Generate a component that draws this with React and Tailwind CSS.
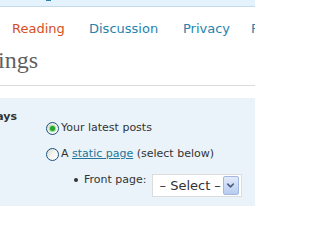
import { ChevronDown } from 'lucide-react';

const Radio = ({ checked }) => (
    <div className="w-[13px] h-[13px] shrink-0 rounded-full border border-[#1c5180] bg-gradient-to-br from-[#dcdcd4] via-[#f4f4f0] to-white flex items-center justify-center">
        {checked && <div className="w-[5px] h-[5px] rounded-full bg-[#2aa52a] shadow-[0_0_1px_1px_#8ddc8d]"></div>}
    </div>
);

const App = () => {
    return (
        <div className="w-[255px] h-[206px] overflow-hidden bg-white text-[#333] font-['DejaVu_Sans',Verdana,sans-serif]">
            {/* top admin bar edge */}
            <div className="h-[7px] bg-[#e4f2fd] border-b border-[#c6d9e9] pl-[46px]">
                <div className="w-[5px] h-[1px] bg-[#2583ad]"></div>
            </div>

            {/* submenu tabs */}
            <div className="mt-[14px] flex pl-[12px] text-[13px] leading-[16px] whitespace-nowrap">
                <span className="w-[77px] shrink-0 text-[#d54e21]">Reading</span>
                <span className="w-[94px] shrink-0 text-[#2583ad]">Discussion</span>
                <span className="w-[68px] shrink-0 text-[#2583ad]">Privacy</span>
                <span className="shrink-0 text-[#2583ad]">Permalinks</span>
            </div>

            {/* page title */}
            <div className="mt-[10px] pb-[11px] border-b border-[#dadada]">
                <div className="w-[38px] flex justify-end whitespace-nowrap font-['Liberation_Serif',Georgia,serif] text-[24px] leading-[27px] text-[#5f5f5f]">
                    Reading Settings
                </div>
            </div>

            {/* form table */}
            <div className="mt-[12px] h-[120px] bg-[#eaf3fa] flex text-[11px] leading-[14px]">
                <div className="w-[46px] shrink-0 pt-[12px]">
                    <div className="w-[17px] flex justify-end whitespace-nowrap font-bold text-[#333]">
                        Front page displays
                    </div>
                </div>
                <div className="pt-[23px] flex flex-col gap-[12px] whitespace-nowrap">
                    <label className="flex items-center h-[14px]">
                        <Radio checked />
                        <span className="ml-[2px]">Your latest posts</span>
                    </label>
                    <label className="flex items-center h-[14px]">
                        <Radio />
                        <span className="ml-[2px]">
                            A <a className="text-[#21759b] underline">static page</a> (select below)
                        </span>
                    </label>
                    <div className="flex items-start pl-[28px]">
                        <div className="mt-[5px] w-[4px] h-[4px] rounded-full bg-[#333]"></div>
                        <span className="ml-[6px]">Front page:</span>
                        <div className="ml-[5px] mt-[1px] w-[90px] h-[23px] bg-white border border-[#dcdcdc] flex items-center pl-[7px] pr-[2px]">
                            <span className="flex-1 text-[13px] leading-[16px] mt-[1px]">– Select –</span>
                            <div className="w-[16px] h-[19px] rounded-[2px] border border-[#a3b8e0] bg-gradient-to-b from-[#e3ebfa] to-[#b8cbef] flex items-center justify-center text-[#4d6185]">
                                <ChevronDown size={11} strokeWidth={3.5} />
                            </div>
                        </div>
                    </div>
                </div>
            </div>
        </div>
    );
};

export default App;
